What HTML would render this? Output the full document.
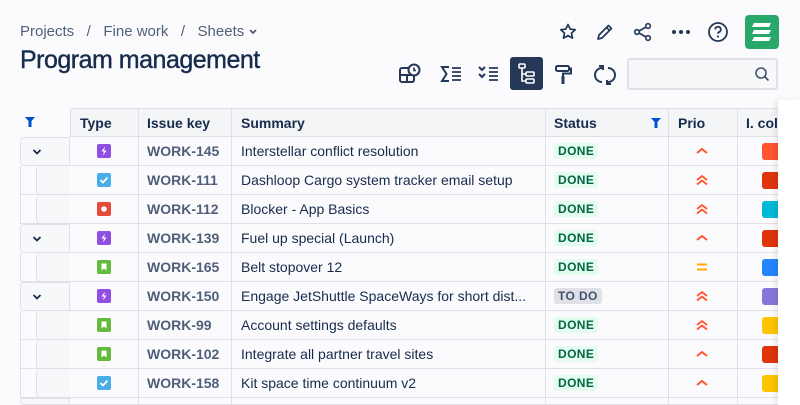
<!DOCTYPE html>
<html><head><meta charset="utf-8"><style>
*{box-sizing:border-box;margin:0;padding:0}
html,body{width:800px;height:405px;overflow:hidden}
body{background:#fbfbfd;font-family:"Liberation Sans",sans-serif;color:#172b4d;position:relative}
.abs{position:absolute}
svg{display:block}
.bc{left:20px;top:23px;font-size:15px;color:#505f79;display:flex;align-items:center;gap:4px}
h1{position:absolute;left:20px;top:46px;font-size:25px;font-weight:normal;letter-spacing:-0.5px;color:#172b4d;-webkit-text-stroke:0.4px #172b4d}
.cell{position:absolute;height:29px;border-right:1.5px solid #dfe1e6;border-bottom:1.5px solid #dfe1e6;font-size:14px;line-height:28px;white-space:nowrap;overflow:hidden}
.hd{background:#f4f5f7;font-weight:bold;color:#172b4d}
.key{color:#505f79;font-weight:bold;padding-left:8px}
.lz{position:absolute;height:14px;width:14px;border-radius:2px;left:27px;top:7px}
.badge{position:absolute;left:8px;top:6px;font-size:12px;font-weight:bold;line-height:16px;padding:0 4px;border-radius:3px;letter-spacing:0.4px}
.done{background:#e3fcef;color:#006644}
.todo{background:#dfe1e6;color:#42526e}
.sw{position:absolute;left:24px;top:6px;width:20px;height:17px;border-radius:3px}
</style></head><body>
<div class="abs bc">Projects &nbsp;&nbsp;/&nbsp;&nbsp; Fine work &nbsp;&nbsp;/&nbsp;&nbsp; Sheets <svg width="10" height="8" viewBox="0 0 10 8"><path d="M2 2l3 3 3-3" stroke="#505f79" stroke-width="1.8" fill="none"/></svg></div>
<h1>Program management</h1>

<svg class="abs" style="left:558px;top:22px" width="20" height="20" viewBox="0 0 20 20"><path d="M10 2.5l2.2 4.6 5 .6-3.7 3.4 1 5-4.5-2.5-4.5 2.5 1-5L2.8 7.7l5-.6z" fill="none" stroke="#253858" stroke-width="1.7" stroke-linejoin="round"/></svg>
<svg class="abs" style="left:595px;top:22px" width="20" height="20" viewBox="0 0 20 20"><path d="M3 17l1-4L13.5 3.5l3 3L7 16z M11.5 5.5l3 3" fill="none" stroke="#253858" stroke-width="1.7" stroke-linejoin="round"/></svg>
<svg class="abs" style="left:633px;top:22px" width="20" height="20" viewBox="0 0 20 20"><circle cx="4" cy="10" r="2.3" fill="none" stroke="#253858" stroke-width="1.6"/><circle cx="15" cy="4" r="2.3" fill="none" stroke="#253858" stroke-width="1.6"/><circle cx="15" cy="16" r="2.3" fill="none" stroke="#253858" stroke-width="1.6"/><path d="M6 9l7-4M6 11l7 4" stroke="#253858" stroke-width="1.6"/></svg>
<svg class="abs" style="left:670px;top:22px" width="22" height="20" viewBox="0 0 22 20"><circle cx="4" cy="10" r="2" fill="#253858"/><circle cx="11" cy="10" r="2" fill="#253858"/><circle cx="18" cy="10" r="2" fill="#253858"/></svg>
<svg class="abs" style="left:707px;top:21px" width="22" height="22" viewBox="0 0 22 22"><circle cx="11" cy="11" r="9" fill="none" stroke="#253858" stroke-width="1.8"/><path d="M8.2 8.5a2.8 2.8 0 1 1 3.8 2.6c-.8.4-1 .9-1 1.7" fill="none" stroke="#253858" stroke-width="1.8"/><circle cx="11" cy="15.5" r="1.1" fill="#253858"/></svg>
<div class="abs" style="left:745px;top:15px;width:34px;height:34px;background:#2aa86b;border-radius:4px"></div>
<svg class="abs" style="left:745px;top:15px" width="34" height="34" viewBox="0 0 34 34"><path d="M9 8h17l-2 4H7zM9 15h17l-2 4H7zM9 22h17l-2 4H7z" fill="#fff"/></svg>

<svg class="abs" style="left:398px;top:63px" width="24" height="22" viewBox="0 0 24 22"><rect x="2" y="5" width="14" height="14" rx="2" fill="none" stroke="#253858" stroke-width="2"/><path d="M2 12h14M9 12v7" stroke="#253858" stroke-width="2"/><circle cx="16" cy="7" r="5.5" fill="#fbfbfd" stroke="#253858" stroke-width="2"/><path d="M16 4.5v3h2" stroke="#253858" stroke-width="1.6" fill="none"/></svg>
<svg class="abs" style="left:440px;top:64px" width="24" height="20" viewBox="0 0 24 20"><path d="M9 3H2l4.5 7L2 17h7" fill="none" stroke="#253858" stroke-width="2"/><path d="M12 4h9M12 8h9M12 12h9M12 16h9" stroke="#253858" stroke-width="1.8"/></svg>
<svg class="abs" style="left:477px;top:64px" width="24" height="20" viewBox="0 0 24 20"><path d="M2 3l3 3 3-3M2 10l3 3 3-3" fill="none" stroke="#253858" stroke-width="2"/><path d="M12 4h9M12 8h9M12 12h9M12 16h9" stroke="#253858" stroke-width="1.8"/></svg>
<div class="abs" style="left:510px;top:57px;width:33px;height:33px;background:#253858;border-radius:3px"></div>
<svg class="abs" style="left:516px;top:62px" width="22" height="24" viewBox="0 0 22 24"><rect x="3" y="2" width="6" height="4" rx="1" fill="none" stroke="#fff" stroke-width="1.6"/><rect x="10" y="10" width="8" height="4" rx="1" fill="none" stroke="#fff" stroke-width="1.6"/><rect x="10" y="17" width="8" height="4" rx="1" fill="none" stroke="#fff" stroke-width="1.6"/><path d="M6 6v13h4M6 12h4" fill="none" stroke="#fff" stroke-width="1.6"/></svg>
<svg class="abs" style="left:553px;top:63px" width="22" height="24" viewBox="0 0 22 24"><rect x="3" y="3" width="13" height="5" rx="1.5" fill="none" stroke="#253858" stroke-width="2"/><path d="M16 5.5h2v5h-8v3" fill="none" stroke="#253858" stroke-width="2"/><rect x="8.5" y="13" width="3" height="8" fill="#253858"/></svg>
<svg class="abs" style="left:594px;top:63px" width="22" height="24" viewBox="0 0 22 24"><path d="M8 5A7 7 0 0 0 8 19M14 5a7 7 0 0 1 0 14" fill="none" stroke="#253858" stroke-width="2"/><path d="M5 3h4v4M17 21h-4v-4" fill="none" stroke="#253858" stroke-width="2"/></svg>
<div class="abs" style="left:627px;top:58px;width:151px;height:32px;border:2px solid #dfe1e6;border-radius:3px;background:#f7f8fa"></div>
<svg class="abs" style="left:754px;top:66px" width="16" height="16" viewBox="0 0 16 16"><circle cx="7" cy="7" r="5" fill="none" stroke="#42526e" stroke-width="1.6"/><path d="M10.5 10.5l4 4" stroke="#42526e" stroke-width="1.6"/></svg>

<div class="abs" style="left:0;top:0;width:800px;height:405px;overflow:hidden">
<svg class="abs" style="left:24px;top:116px" width="12" height="12" viewBox="0 0 12 12"><path d="M1 1h10L7.5 5v6h-3V5z" fill="#0052cc"/></svg>
<div class="cell hd" style="left:70px;width:69px;top:108px;padding-left:9px;border-top:1.5px solid #dfe1e6;border-left:1.5px solid #dfe1e6">Type</div>
<div class="cell hd" style="left:139px;width:93px;top:108px;padding-left:8px;border-top:1.5px solid #dfe1e6">Issue key</div>
<div class="cell hd" style="left:232px;width:314px;top:108px;padding-left:9px;border-top:1.5px solid #dfe1e6">Summary</div>
<div class="cell hd" style="left:546px;width:123px;top:108px;padding-left:8px;border-top:1.5px solid #dfe1e6">Status<svg class="abs" style="left:104px;top:8px" width="12" height="12" viewBox="0 0 12 12"><path d="M1 1h10L7.5 5v6h-3V5z" fill="#0052cc"/></svg></div>
<div class="cell hd" style="left:669px;width:69px;top:108px;padding-left:9px;border-top:1.5px solid #dfe1e6">Prio</div>
<div class="cell hd" style="left:738px;width:60px;top:108px;padding-left:8px;border-top:1.5px solid #dfe1e6">I. col</div>
<div id="rows"></div>
</div>
<script>
var R=[
[1,'e','WORK-145','Interstellar conflict resolution','DONE','up','#ff5630'],
[0,'t','WORK-111','Dashloop Cargo system tracker email setup','DONE','hi','#de350b'],
[0,'b','WORK-112','Blocker - App Basics','DONE','hi','#00b8d9'],
[1,'e','WORK-139','Fuel up special (Launch)','DONE','up','#de350b'],
[0,'s','WORK-165','Belt stopover 12','DONE','med','#2684ff'],
[1,'e','WORK-150','Engage JetShuttle SpaceWays for short dist...','TO DO','hi','#8777d9'],
[0,'s','WORK-99','Account settings defaults','DONE','hi','#ffc400'],
[0,'s','WORK-102','Integrate all partner travel sites','DONE','up','#de350b'],
[0,'t','WORK-158','Kit space time continuum v2','DONE','up','#ffc400'],
[1,'x','','','','','#fff']];
var ic={e:'<div class="lz" style="background:#904ee2"><svg width="14" height="14" viewBox="0 0 14 14"><path d="M8 2.5L4.5 7.5h2.5L6 11.5l3.5-5H7z" fill="#fff"/></svg></div>',
t:'<div class="lz" style="background:#4bade8"><svg width="14" height="14" viewBox="0 0 14 14"><path d="M3.5 7l2.5 2.5 4.5-5" stroke="#fff" stroke-width="1.8" fill="none"/></svg></div>',
b:'<div class="lz" style="background:#e5493a"><svg width="14" height="14" viewBox="0 0 14 14"><circle cx="7" cy="7" r="2.8" fill="#fff"/></svg></div>',
s:'<div class="lz" style="background:#63ba3c"><svg width="14" height="14" viewBox="0 0 14 14"><path d="M4.5 3.5h5v7L7 8.5l-2.5 2z" fill="#fff"/></svg></div>'};
var pr={up:'<svg class="abs" style="left:26px;top:8px" width="14" height="12" viewBox="0 0 14 12"><path d="M2 8l5-4 5 4" stroke="#ff5630" stroke-width="2" fill="none"/></svg>',
hi:'<svg class="abs" style="left:26px;top:7px" width="14" height="14" viewBox="0 0 14 14"><path d="M2 7l5-4 5 4M2 11.5l5-4 5 4" stroke="#ff5630" stroke-width="1.8" fill="none"/></svg>',
med:'<svg class="abs" style="left:26px;top:8px" width="14" height="12" viewBox="0 0 14 12"><path d="M2 3.5h10M2 8.5h10" stroke="#ffab00" stroke-width="2"/></svg>'};
var h='';
R.forEach(function(r,i){var t=137+29*i;var hh=(t+29>405)?(405-t):29;var hs='height:'+hh+'px;';var b='border-bottom:1.5px solid #dfe1e6;';
if(r[0])h+='<div class="cell" style="left:20px;width:50px;top:'+t+'px;'+hs+'border:1.5px solid #dfe1e6;border-radius:4px 0 0 4px;background:#f7f8fa"><svg class="abs" style="left:11px;top:10px" width="10" height="8" viewBox="0 0 10 8"><path d="M1.5 2l3.5 3.5L8.5 2" stroke="#172b4d" stroke-width="1.8" fill="none"/></svg></div>';
else h+='<div class="cell" style="left:20px;width:50px;top:'+t+'px;'+hs+'border:none;border-left:1.5px solid #dfe1e6;'+b+'"></div><div class="cell" style="left:36px;width:34px;top:'+t+'px;'+hs+'border:1.5px solid #dfe1e6;border-right:none;border-top:none;border-radius:4px 0 0 4px;background:#f7f8fa"></div>';
h+='<div class="cell" style="left:70px;width:69px;top:'+t+'px;'+hs+'">'+(ic[r[1]]||'')+'</div>';
h+='<div class="cell key" style="left:139px;width:93px;top:'+t+'px;'+hs+'">'+r[2]+'</div>';
h+='<div class="cell" style="left:232px;width:314px;top:'+t+'px;'+hs+'padding-left:9px">'+r[3]+'</div>';
h+='<div class="cell" style="left:546px;width:123px;top:'+t+'px;'+hs+'">'+(r[4]?'<span class="badge '+(r[4]=='DONE'?'done':'todo')+'">'+r[4]+'</span>':'')+'</div>';
h+='<div class="cell" style="left:669px;width:69px;top:'+t+'px;'+hs+'">'+(pr[r[5]]||'')+'</div>';
h+='<div class="cell" style="left:738px;width:40px;top:'+t+'px;'+hs+'border-right:none">'+(r[2]?'<div class="sw" style="background:'+r[6]+'"></div>':'')+'</div>';
});
h+='<div class="abs" style="left:778px;top:100px;width:22px;height:305px;background:#fff;box-shadow:-3px 0 5px rgba(0,0,0,0.08)"></div>';
document.getElementById('rows').innerHTML=h;
</script>
</body></html>
